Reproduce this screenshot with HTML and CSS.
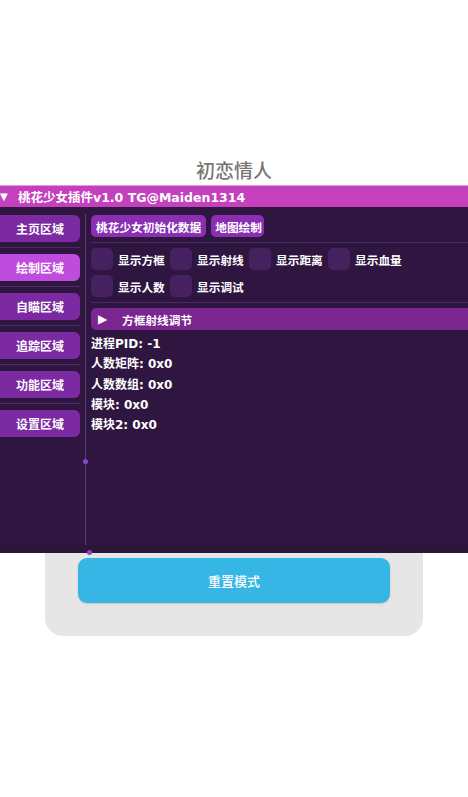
FILE: index.html
```html
<!DOCTYPE html>
<html>
<head>
<meta charset="utf-8">
<link rel="stylesheet" href="styles.css">
</head>
<body>
<div class="page">
  <h1 class="title">初恋情人</h1>
  <div class="card">
    <button class="reset">重置模式</button>
  </div>

  <div class="panel">
    <div class="panel-head"><span class="caret">▼</span><span>桃花少女插件v1.0 TG@Maiden1314</span></div>
    <div class="panel-body">
      <div class="sidebar">
        <div class="nav">主页区域</div><div class="sep"></div>
        <div class="nav active">绘制区域</div><div class="sep"></div>
        <div class="nav">自瞄区域</div><div class="sep"></div>
        <div class="nav">追踪区域</div><div class="sep"></div>
        <div class="nav">功能区域</div><div class="sep"></div>
        <div class="nav">设置区域</div>
      </div>
      <div class="divider"><span class="dot dot1"></span><span class="dot dot2"></span></div>
      <div class="content">
        <div class="actions">
          <span class="btn">桃花少女初始化数据</span>
          <span class="btn btn-tight">地图绘制</span>
        </div>
        <div class="hr"></div>
        <div class="checks">
          <label class="chk"><span class="box"></span>显示方框</label>
          <label class="chk"><span class="box"></span>显示射线</label>
          <label class="chk"><span class="box"></span>显示距离</label>
          <label class="chk"><span class="box"></span>显示血量</label>
          <label class="chk"><span class="box"></span>显示人数</label>
          <label class="chk"><span class="box"></span>显示调试</label>
        </div>
        <div class="hr"></div>
        <div class="collapse"><span class="tri">▶</span>方框射线调节</div>
        <div class="info">
          <div>进程PID: -1</div>
          <div>人数矩阵: 0x0</div>
          <div>人数数组: 0x0</div>
          <div>模块: 0x0</div>
          <div>模块2: 0x0</div>
        </div>
      </div>
    </div>
  </div>
</div>
</body>
</html>
```

FILE: styles.css
```css
* { box-sizing: border-box; }
html, body { margin: 0; padding: 0; background: #fff; }
body { font-family: "DejaVu Sans", "Noto Sans CJK SC", sans-serif; }
.page { position: relative; width: 468px; height: 797px; overflow: hidden; }

.title {
  margin: 0;
  padding-top: 157px;
  text-align: center;
  font-family: "Noto Sans CJK SC", sans-serif;
  font-weight: 500;
  font-size: 19px;
  line-height: 26px;
  color: #767676;
}
.card {
  margin: 12px 45px 0;
  height: 441px;
  background: #e6e6e6;
  border-radius: 18px;
  padding: 363px 33px 0;
}
.reset {
  display: block;
  width: 312px;
  height: 45px;
  border: 0;
  border-radius: 9px;
  background: #36b6e5;
  color: #fff;
  font-family: "Noto Sans CJK SC", sans-serif;
  font-size: 13px;
  font-weight: 500;
  box-shadow: 0 1px 2px rgba(0,0,0,0.15);
}

.panel {
  position: absolute;
  left: 0; top: 185px;
  width: 468px; height: 368px;
  background: #2e1640;
  border-bottom: 8px solid #2b1538;
  color: #fff;
  font-weight: 700;
  font-size: 12px;
}
.panel-head {
  height: 22px;
  background: #c540bc;
  border-top: 1px solid #e59ce0;
  display: flex;
  align-items: center;
  font-size: 12.5px;
}
.caret { width: 18px; font-size: 10px; padding-left: 0; }
.panel-body { display: flex; height: 338px; }
.sidebar { width: 80px; padding-top: 8px; }
.nav {
  height: 27px;
  border-radius: 0 6px 6px 0;
  background: #7c2aa2;
  display: flex; align-items: center; justify-content: center;
  font-size: 12px;
}
.nav.active { background: #c04cdd; }
.sep { height: 1px; margin: 5px 0 6px; background: #4c2b62; }
.divider {
  position: relative;
  width: 11px;
  margin-top: 7px;
  display: flex; justify-content: center;
}
.divider::before { content: ""; width: 1px; background: #5a3a70; }
.dot { position: absolute; width: 5px; height: 5px; border-radius: 50%; background: #8a44d0; }
.dot1 { left: 3px; top: 245px; }
.dot2 { left: 7px; top: 336px; }
.content { flex: 1; padding-top: 8px; }
.actions { display: flex; gap: 5px; height: 22px; }
.btn {
  background: #8a2fb3;
  border-radius: 5px;
  padding: 0 5px;
  display: flex; align-items: center;
  font-size: 11.7px;
}
.btn-tight { padding: 0 2px 0 4px; }
.hr { height: 1px; background: #4a2a60; margin: 5px 0 5px; }
.checks { display: grid; grid-template-columns: repeat(4, 79px); row-gap: 5px; }
.chk { display: flex; align-items: center; height: 22px; font-size: 11.7px; }
.box { width: 22px; height: 22px; border-radius: 5px; background: #45215f; margin-right: 5px; }
.collapse {
  margin-top: 5px;
  height: 22px;
  background: #7a2590;
  border-radius: 5px 0 0 5px;
  display: flex; align-items: center;
  font-size: 11.7px;
}
.tri { width: 31px; padding-left: 7px; font-size: 12px; }
.info { padding-top: 4px; font-size: 12px; line-height: 20.3px; }
```
